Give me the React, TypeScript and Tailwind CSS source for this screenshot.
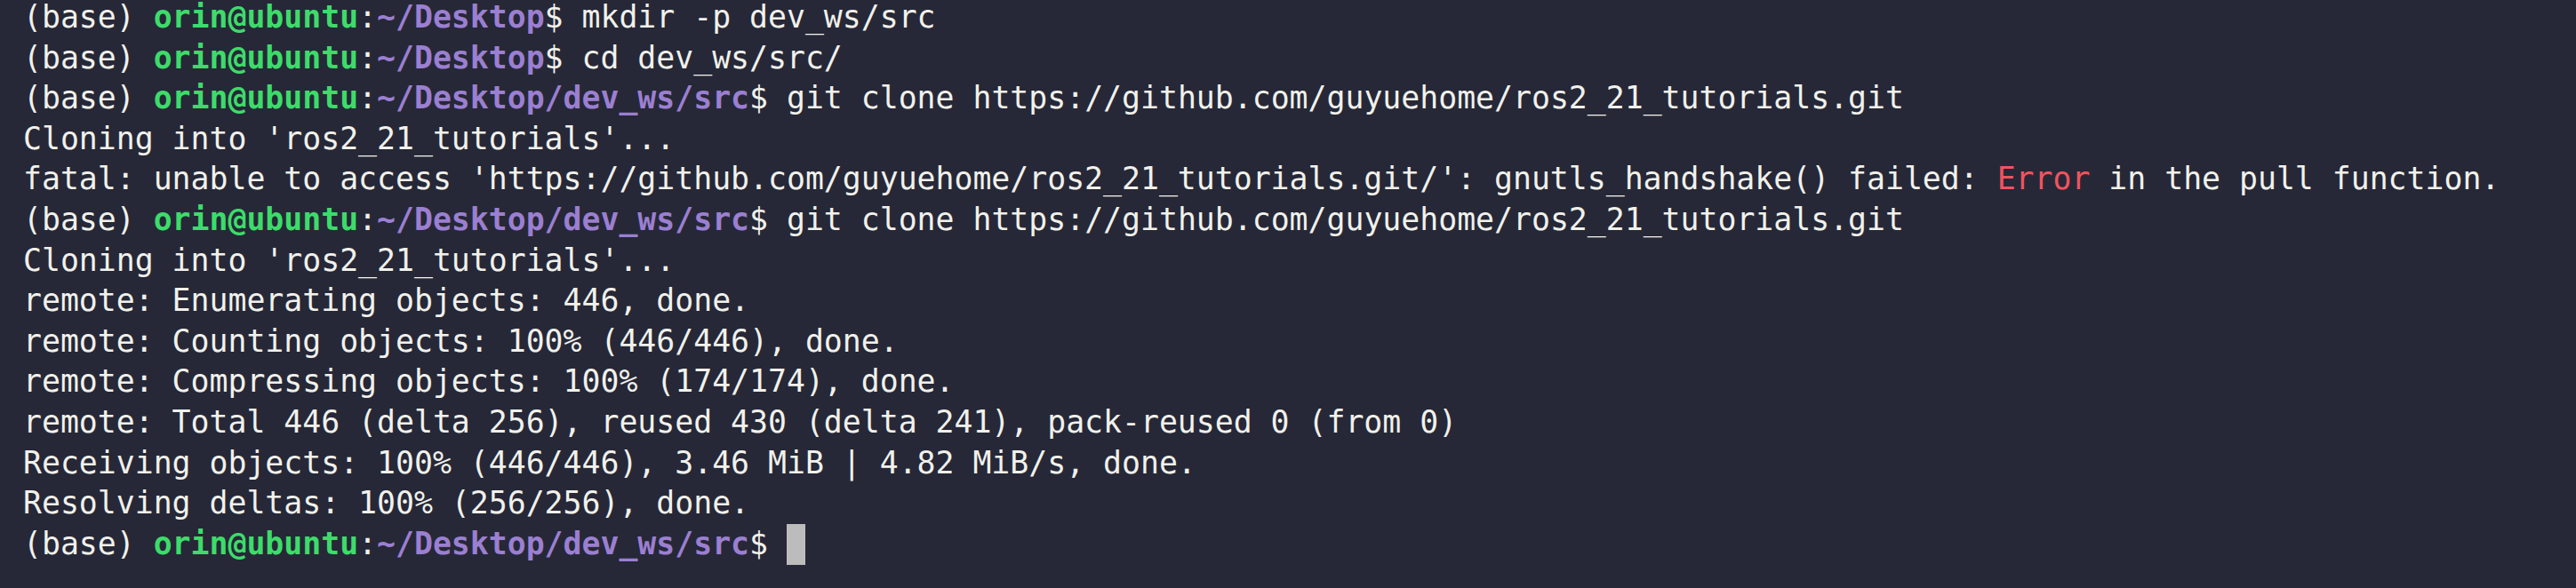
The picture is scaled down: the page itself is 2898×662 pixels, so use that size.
import React from 'react';

type Seg = { t: string; c?: 'user' | 'path' | 'err' };

const prompt = (path: string, cmd: string): Seg[] => [
  { t: '(base) ' },
  { t: 'orin@ubuntu', c: 'user' },
  { t: ':' },
  { t: path, c: 'path' },
  { t: '$ ' + cmd },
];

const lines: Seg[][] = [
  prompt('~/Desktop', 'mkdir -p dev_ws/src'),
  prompt('~/Desktop', 'cd dev_ws/src/'),
  prompt('~/Desktop/dev_ws/src', 'git clone https://github.com/guyuehome/ros2_21_tutorials.git'),
  [{ t: "Cloning into 'ros2_21_tutorials'..." }],
  [
    { t: "fatal: unable to access 'https://github.com/guyuehome/ros2_21_tutorials.git/': gnutls_handshake() failed: " },
    { t: 'Error', c: 'err' },
    { t: ' in the pull function.' },
  ],
  prompt('~/Desktop/dev_ws/src', 'git clone https://github.com/guyuehome/ros2_21_tutorials.git'),
  [{ t: "Cloning into 'ros2_21_tutorials'..." }],
  [{ t: 'remote: Enumerating objects: 446, done.' }],
  [{ t: 'remote: Counting objects: 100% (446/446), done.' }],
  [{ t: 'remote: Compressing objects: 100% (174/174), done.' }],
  [{ t: 'remote: Total 446 (delta 256), reused 430 (delta 241), pack-reused 0 (from 0)' }],
  [{ t: 'Receiving objects: 100% (446/446), 3.46 MiB | 4.82 MiB/s, done.' }],
  [{ t: 'Resolving deltas: 100% (256/256), done.' }],
];

const segClass = (c?: Seg['c']) => {
  if (c === 'user') return 'font-bold text-[#3ddc6a]';
  if (c === 'path') return 'font-bold text-[#9b7fd1]';
  if (c === 'err') return 'text-[#f0545f]';
  return '';
};

export default function App() {
  return (
    <div className="w-[2898px] h-[662px] overflow-hidden bg-[#262837] text-[#f1f1eb]">
      <div className="-mt-[3px] pl-[26px] font-['DejaVu_Sans_Mono','Liberation_Mono',monospace] text-[34.8px] leading-[45.6px] whitespace-pre">
        {lines.map((line, i) => (
          <div key={i} className="h-[45.6px]">
            {line.map((s, j) => (
              <span key={j} className={segClass(s.c)}>{s.t}</span>
            ))}
          </div>
        ))}
        <div className="flex h-[45.6px] items-center">
          {prompt('~/Desktop/dev_ws/src', '').map((s, j) => (
            <span key={j} className={segClass(s.c)}>{s.t}</span>
          ))}
          <span className="inline-block h-[46px] w-[21px] bg-[#bcbcbc]" />
        </div>
      </div>
    </div>
  );
}
